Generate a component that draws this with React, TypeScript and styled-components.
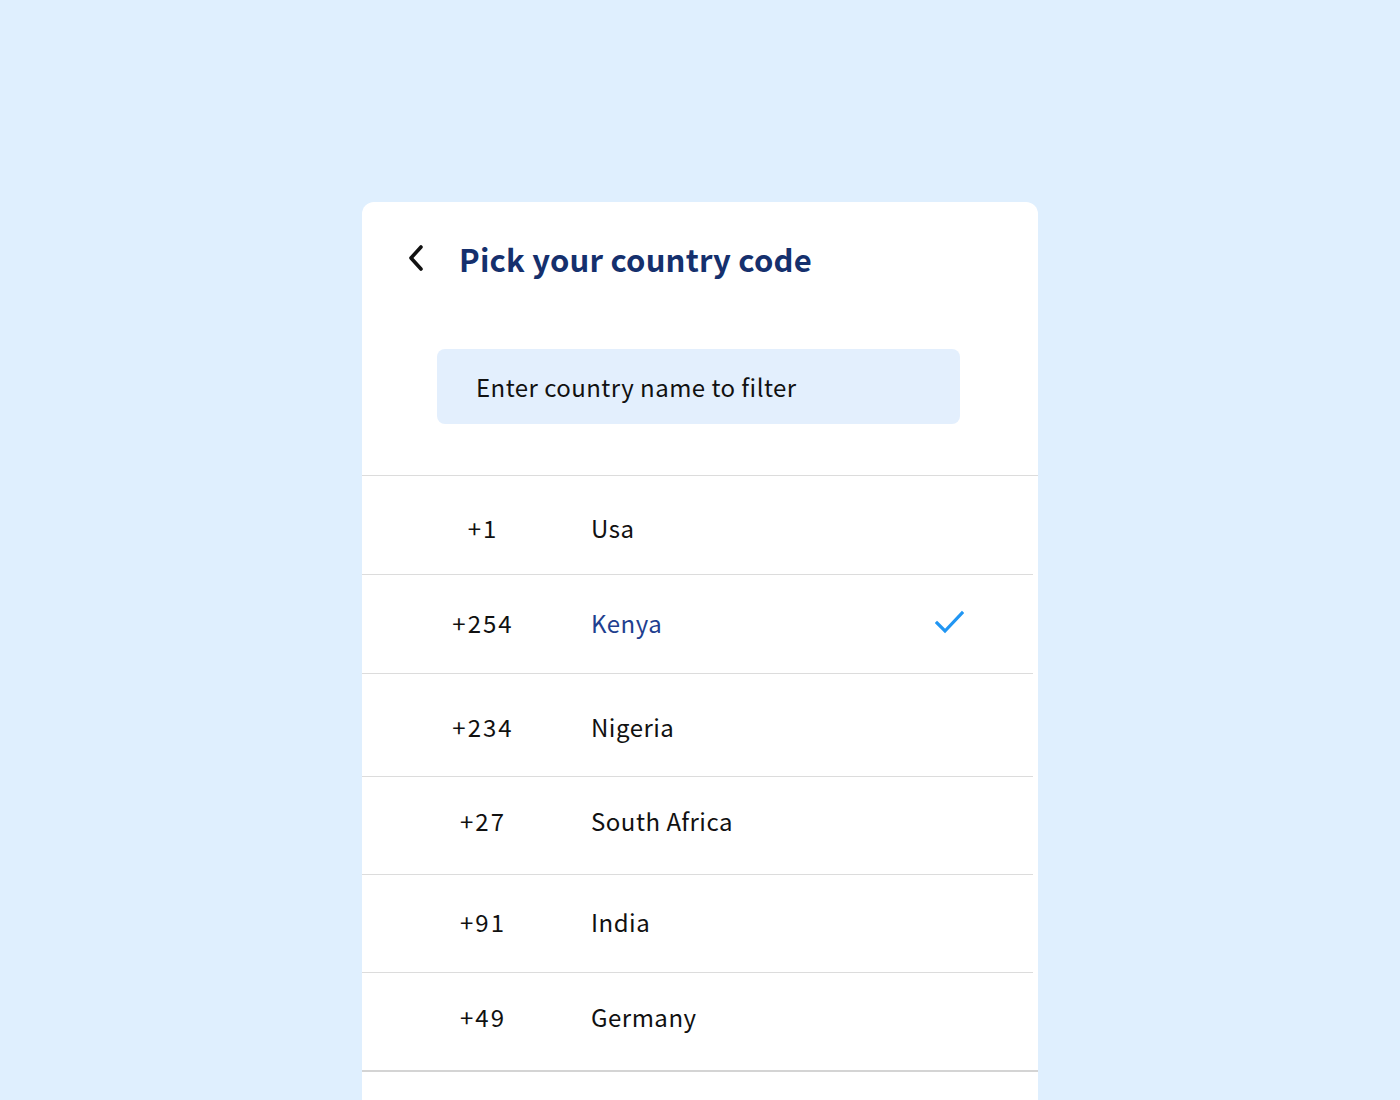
import styled, { createGlobalStyle } from 'styled-components';

type Country = {
  code: string;
  name: string;
  height: number;
  shift: number;
  selected?: boolean;
};

const countries: Country[] = [
  { code: '+1', name: 'Usa', height: 99, shift: 2 },
  { code: '+254', name: 'Kenya', height: 99, shift: -2, selected: true },
  { code: '+234', name: 'Nigeria', height: 103, shift: 1 },
  { code: '+27', name: 'South Africa', height: 98, shift: -5 },
  { code: '+91', name: 'India', height: 98, shift: -2 },
  { code: '+49', name: 'Germany', height: 99, shift: -5 },
];

const GlobalStyle = createGlobalStyle`
  html, body {
    margin: 0;
    padding: 0;
    background: #dfeffe;
    font-family: 'Noto Sans CJK JP', 'Noto Sans', sans-serif;
  }
`;

const Page = styled.div`
  height: 1100px;
  display: flex;
  justify-content: center;
  padding-top: 202px;
  box-sizing: border-box;
  overflow: hidden;
`;

const Card = styled.div`
  width: 676px;
  background: #ffffff;
  border-radius: 12px 12px 0 0;
  display: flex;
  flex-direction: column;
`;

const Header = styled.div`
  display: flex;
  align-items: center;
  gap: 35px;
  padding: 38px 0 2px 46px;
  height: 36px;
`;

const BackButton = styled.button`
  border: 0;
  background: transparent;
  padding: 0;
  width: 16px;
  height: 26px;
  display: inline-flex;
  align-items: center;
  justify-content: center;
  cursor: pointer;
`;

const Title = styled.h1`
  margin: 0;
  font-size: 31px;
  font-weight: 700;
  color: #15306d;
  letter-spacing: 0.2px;
  line-height: 1;
`;

const SearchBox = styled.div`
  margin: 71px 0 0 75px;
  width: 523px;
  height: 75px;
  box-sizing: border-box;
  border-radius: 8px;
  background: #e3effd;
  display: flex;
  align-items: center;
  padding-left: 39px;
  font-size: 24px;
  color: #111111;
  letter-spacing: 0.45px;
`;

const List = styled.div`
  margin-top: 51px;
  border-top: 1px solid #dcdcdc;
  display: flex;
  flex-direction: column;
`;

const Row = styled.div<{ $height: number; $shift: number; $last?: boolean }>`
  height: ${(p) => p.$height}px;
  box-sizing: border-box;
  display: grid;
  grid-template-columns: 229px 1fr 29px;
  align-items: center;
  padding-right: 69px;
  padding-top: ${(p) => Math.max(p.$shift, 0) * 2}px;
  padding-bottom: ${(p) => Math.max(-p.$shift, 0) * 2}px;
  border-bottom: ${(p) => (p.$last ? '2px solid #d4d4d4' : '1px solid #dcdcdc')};
  margin-right: ${(p) => (p.$last ? '0' : '5px')};
  font-size: 24px;
  letter-spacing: 0.5px;
`;

const Code = styled.span`
  padding-left: 13px;
  text-align: center;
  color: #111111;
  letter-spacing: 2px;
`;

const Name = styled.span<{ $selected?: boolean }>`
  color: ${(p) => (p.$selected ? '#1f3f8f' : '#111111')};
`;

const Check = styled.span`
  display: inline-flex;
  width: 29px;
  height: 24px;
`;

function ChevronLeft() {
  return (
    <svg width="16" height="26" viewBox="0 0 16 26" fill="none">
      <path
        d="M13 2 L3 13 L13 24"
        stroke="#111"
        strokeWidth="3.6"
        strokeLinecap="round"
        strokeLinejoin="round"
      />
    </svg>
  );
}

function CheckMark() {
  return (
    <svg width="29" height="24" viewBox="0 0 29 24" fill="none">
      <path
        d="M2 13 L10 21 L27 3"
        stroke="#2196f3"
        strokeWidth="3.2"
        strokeLinecap="square"
        strokeLinejoin="miter"
      />
    </svg>
  );
}

export default function App() {
  return (
    <>
      <GlobalStyle />
      <Page>
        <Card>
          <Header>
            <BackButton type="button" aria-label="Back">
              <ChevronLeft />
            </BackButton>
            <Title>Pick your country code</Title>
          </Header>
          <SearchBox>Enter country name to filter</SearchBox>
          <List>
            {countries.map((c, i) => (
              <Row
                key={c.code}
                $height={c.height}
                $shift={c.shift}
                $last={i === countries.length - 1}
              >
                <Code>{c.code}</Code>
                <Name $selected={c.selected}>{c.name}</Name>
                {c.selected ? (
                  <Check>
                    <CheckMark />
                  </Check>
                ) : (
                  <span />
                )}
              </Row>
            ))}
          </List>
        </Card>
      </Page>
    </>
  );
}
